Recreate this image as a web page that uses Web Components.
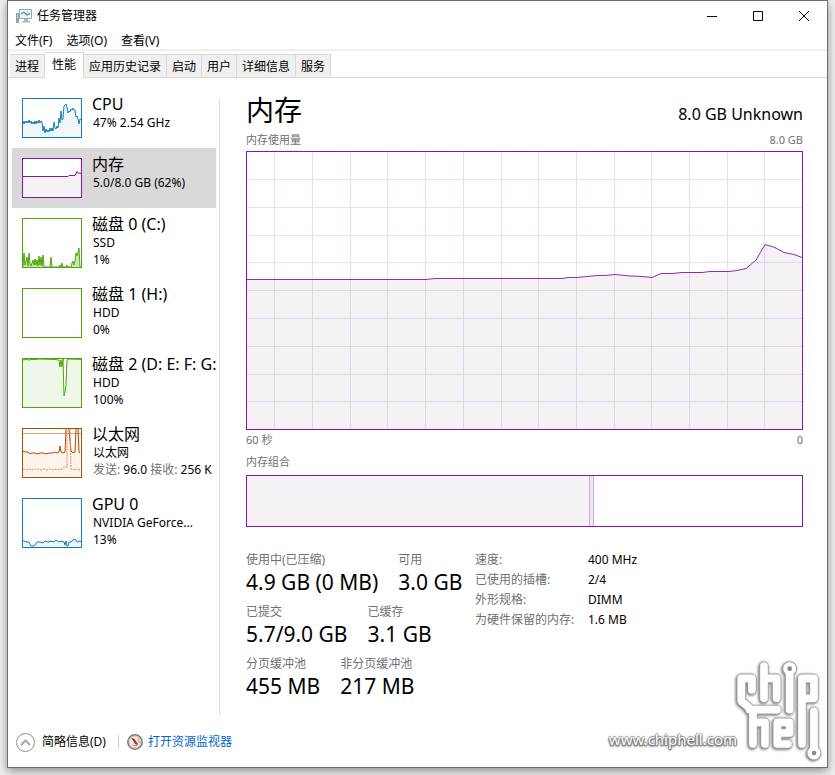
<!DOCTYPE html>
<html lang="zh-CN">
<head>
<meta charset="utf-8">
<title>任务管理器</title>
<style>
  html { height: 100%; }
  body {
    margin: 0; min-height: 100%; box-sizing: border-box; padding: 0 7px 7px;
    display: grid; background: #f0f0f0; color: #000;
    font: 12px/16px "Noto Sans", "Noto Sans CJK SC", sans-serif;
    overflow: hidden;
  }
</style>
</head>
<body>
<tm-window></tm-window>

<script>
const define = (name, html, setup) => {
  const tpl = document.createElement('template');
  tpl.innerHTML = html;
  customElements.define(name, class extends HTMLElement {
    connectedCallback() {
      if (this.shadowRoot) return;
      this.attachShadow({ mode: 'open' }).append(tpl.content.cloneNode(true));
      if (setup) setup(this, this.shadowRoot);
    }
  });
};

define('tm-titlebar', `
<style>
  :host { display: flex; align-items: center; height: 30px; padding-left: 8px; }
  h1 { flex: 1; margin: 0 0 0 5px; font: inherit; }
  button { width: 46px; height: 30px; padding: 0; border: 0; background: none; display: grid; place-items: center; }
  svg { display: block; }
</style>
<svg width="16" height="16" viewBox="0 0 16 16">
  <rect x="0.5" y="5.5" width="2" height="9" fill="#c9c9c9" stroke="#9b9b9b"/>
  <rect x="1" y="11" width="1" height="2" fill="#5cae4a"/>
  <rect x="3.5" y="1.5" width="12" height="9" fill="#e9f5fc" stroke="#a3a8ac"/>
  <path d="M5 6l2-1.500 1.500 0 2.500 2.500 3-1.500" fill="none" stroke="#2f92c8" stroke-width="1.200"/>
  <path d="M8 11h4v2h2v1.500H6V13h2z" fill="#b4b8ba"/>
</svg>
<h1>任务管理器</h1>
<button aria-label="最小化"><svg width="10" height="11" stroke="#000"><path d="M0 5.5h10"/></svg></button>
<button aria-label="最大化"><svg width="10" height="10" stroke="#000" fill="none"><path d="M.5.5h9v9h-9z"/></svg></button>
<button aria-label="关闭"><svg width="10" height="10" stroke="#000" fill="none"><path d="M0 0l10 10M10 0L0 10"/></svg></button>
`);

define('tm-menubar', `
<style>
  :host { display: flex; gap: 14px; height: 18px; padding-left: 7px; border-bottom: 2px solid #f0f0f0; }
  button { padding: 0; border: 0; background: none; color: inherit; font: inherit; line-height: 20px; }
</style>
<button>文件(F)</button><button>选项(O)</button><button>查看(V)</button>
`);

define('tm-tabs', `
<style>
  :host { display: flex; align-items: flex-end; height: 26px; padding-left: 2px; border-bottom: 1px solid #d9d9d9; }
  button {
    box-sizing: border-box; height: 23px; padding: 0 5px; font: inherit; color: inherit; line-height: 21px;
    border: solid #d9d9d9; border-width: 1px 1px 0 0; background: #f0f0f0;
  }
  button:first-child { border-left-width: 1px; padding: 0 4px; }
  button[aria-selected=true] { height: 26px; margin-bottom: -1px; padding: 0 7px 3px; background: #fff; }
</style>
<button role="tab">进程</button><button role="tab" aria-selected="true">性能</button><button role="tab">应用历史记录</button><button role="tab">启动</button><button role="tab">用户</button><button role="tab">详细信息</button><button role="tab">服务</button>
`);

define('tm-resource', `
<style>
  :host { display: block; }
  button {
    width: 100%; min-height: 60px; padding: 10px 0 10px 10px; border: 0; background: none; color: inherit; font: inherit;
    text-align: left; display: flex; align-items: flex-start; gap: 10px; white-space: nowrap;
  }
  :host([selected]) button { background: #d9d9d9; }
  .graph { flex: none; box-sizing: border-box; width: 60px; height: 50px; border: 1px solid var(--ink); background: #fff; color: var(--ink); }
  :host([short]) .graph { height: 40px; }
  .text { flex: none; display: block; margin-top: -4px; }
  .title { display: block; font-size: 16px; line-height: 20px; }
  .lines { display: block; line-height: 17px; padding-left: 1px; }
  ::slotted(svg) { display: block; width: 100%; height: 100%; }
</style>
<button><span class="graph"><slot name="graph"></slot></span><span class="text"><span class="title"><slot name="title"></slot></span><span class="lines"><slot></slot></span></span></button>
`);

define('tm-sidebar', `
<style>
  :host { display: block; overflow: hidden; padding: 10px 0 0 4px; }
  tm-resource { margin-right: 3px; }
  svg { fill: none; stroke-width: 1; overflow: hidden; }
  [slot=graph] * { vector-effect: non-scaling-stroke; }
  .line { display: block; }
  i { font-style: normal; color: #707070; }
  .cpu { --ink: #117dbb; } .mem { --ink: #8b12ae; } .disk { --ink: #4da60c; } .net { --ink: #a74f01; }
</style>
<tm-resource class="cpu" short>
  <svg slot="graph" viewBox="0 0 58 38" preserveAspectRatio="none"><path fill="#f1f6fa" stroke="#117dbb" d="M-2 40V23L0 22 1 25 2 22 3 24 4 22 5 24 6 21 7 24 8 22 9 25 10 23 11 25 12 22 13 25 14 22 15 24 16 21 17 24 18 22 19 23 20 32 21 27 22 34 23 30 24 33 25 31 26 33 27 29 28 32 29 29 30 32 31 23 32 29 33 30 34 27 35 29 36 19 37 24 38 12 39 21 40 20 41 7 42 6 43 5 44 8 45 14 46 12 47 13 48 10 49 11 50 9 51 11 52 11 53 18 54 17 55 20 56 25 57 20 60 22V40"/></svg>
  <span slot="title">CPU</span><span class="line">47% 2.54 GHz</span>
</tm-resource>
<tm-resource class="mem" short selected>
  <svg slot="graph" viewBox="0 0 58 38" preserveAspectRatio="none"><path fill="#f4f2f4" stroke="#8b12ae" d="M-2 40V17.500H45L46 16.500H52L54 12.500 55 14 60 14.500V40"/></svg>
  <span slot="title">内存</span><span class="line">5.0/8.0 GB (62%)</span>
</tm-resource>
<tm-resource class="disk">
  <svg slot="graph" viewBox="0 0 58 48" preserveAspectRatio="none"><path fill="#c9e5b6" stroke="#4da60c" d="M-2 50L0 47 1 34 2 46 4 38 5 47 6 34 7 45 8 47 10 41 11 46 12 40 13 46 14 41 15 47 16 37 17 46 18 38 19 47 20 36 21 48 27 48 28 38 29 48 36 48 37 46 38 48 39 44 40 48 43 48 44 46 45 48 48 48 49 44 50 42 51 46 52 42 53 34 54 37 55 33 56 29 57 48 60 50"/></svg>
  <span slot="title">磁盘 0 (C:)</span><span class="line">SSD</span><span class="line">1%</span>
</tm-resource>
<tm-resource class="disk">
  <span slot="title">磁盘 1 (H:)</span><span class="line">HDD</span><span class="line">0%</span>
</tm-resource>
<tm-resource class="disk">
  <svg slot="graph" viewBox="0 0 58 48" preserveAspectRatio="none"><path fill="#eff7e9" stroke="#4da60c" d="M-2 50V1L4 .5 6 1 8 .5 12 .5 16 0 32 .5 36 1 37 8 38 1 39 8 40 0 41 37 42 33 43 26 44 1 46 0 60 .5V50"/></svg>
  <span slot="title">磁盘 2 (D: E: F: G:</span><span class="line">HDD</span><span class="line">100%</span>
</tm-resource>
<tm-resource class="net">
  <svg slot="graph" viewBox="0 0 58 48" preserveAspectRatio="none"><path fill="#fdf3eb" d="M0 21l6 3h30l3-6 3 6 1-24h4l1 23 4 1 2-24h3v48H0z"/><path stroke="#d8a27c" d="M0 4.500h58"/><path stroke="#a74f01" d="M0 22l2 1 3 0 2 2 2-1 3 0 2 1 3-1 4 0 2 1 3-1 4 0 2-1 2 1 2-1 1-6 1 6 2 1 2-1 1-23M46 0l2 22 2 2 2-1 1-23M55 0l1 23 1 1"/><path stroke="#e58a60" stroke-dasharray="2 1" d="M0 40l3 1 3-1 3 1 3-1 3 0 3 1 3-1 3 1 3-1 3 1 3-1 3 1 3-1 3-2 2 0V0M47 0l1 40 2 1 3-1 2 1 3-1"/></svg>
  <span slot="title">以太网</span><span class="line">以太网</span><span class="line"><i>发送:</i> 96.0 <i>接收:</i> 256 K</span>
</tm-resource>
<tm-resource class="cpu">
  <svg slot="graph" viewBox="0 0 58 48" preserveAspectRatio="none"><path fill="#f1f6fa" stroke="#117dbb" d="M-2 50V42L1 42 3 43 6 43 8 47 11 47 14 43 17 43 20 44 22 42 25 43 28 42 31 43 33 41 36 43 38 42 41 43 42 46 43 42 44 47 45 47 46 43 48 43 50 41 52 40 54 43 56 42 60 43V50"/></svg>
  <span slot="title">GPU 0</span><span class="line">NVIDIA GeForce...</span><span class="line">13%</span>
</tm-resource>
`);

define('usage-chart', `
<style>
  :host { display: block; border: 1px solid #8b12ae; height: 277px; }
  svg { display: block; width: 100%; height: 100%; }
  path { vector-effect: non-scaling-stroke; }
</style>
<svg viewBox="0 0 555 277" preserveAspectRatio="none" fill="none">
  <path class="area" fill="#f4f2f5"/>
  <path class="grid" stroke="#8b12ae" stroke-opacity=".15" shape-rendering="crispEdges"/>
  <path class="line" stroke="#9528b4"/>
</svg>`, (host, root) => {
  const pts = [[0,127.5],[179,127.5],[188,126.5],[315,126.5],[321,125.5],[330,125.5],[350,123.5],[358,123.5],[368,122.5],[383,124],[395,124.5],[405,125.5],[414,121.5],[425,121.5],[435,120.5],[455,120.5],[463,119.5],[482,119.5],[490,118.5],[499,116.5],[509,108],[518,92.5],[528,95.5],[537,100.5],[547,102.5],[555,105.5]];
  const line = 'M' + pts.map(p => p.join(' ')).join('L');
  let grid = '';
  for (let i = 0; i < 14; i++) grid += `M${Math.round(27.3 + i * 37.7) + .5} 0V277`;
  for (let i = 1; i < 10; i++) grid += `M0 ${Math.floor(i * 27.8 - .4) + .5}H555`;
  root.querySelector('.line').setAttribute('d', line);
  root.querySelector('.area').setAttribute('d', line + 'V277H0Z');
  root.querySelector('.grid').setAttribute('d', grid);
});

define('memory-composition', `
<style>
  :host { display: flex; height: 50px; border: 1px solid #8b12ae; }
  .used { flex: 342; background: #f4f2f5; }
  .modified { flex: none; width: 3px; border: solid #cfb0db; border-width: 0 1px; background: #eee3f2; }
  .free { flex: 208; }
</style>
<div class="used"></div><div class="modified"></div><div class="free"></div>
`);

define('tm-stat', `
<style>
  :host { display: block; white-space: nowrap; }
  .label { color: #707070; line-height: 18px; }
  .value { font-size: 21px; line-height: 26px; }
</style>
<div class="label"><slot name="label"></slot></div><div class="value"><slot></slot></div>
`);

define('memory-panel', `
<style>
  :host { display: block; padding: 15px 24px 0 26px; }
  header, .caption { display: flex; justify-content: space-between; }
  header { align-items: center; height: 38px; }
  h2 { margin: 0; font-size: 28px; line-height: 34px; padding-bottom: 4px; font-weight: 400; }
  .model { font-size: 16px; line-height: 24px; padding-top: 4px; }
  .caption { font-size: 11px; line-height: 20px; color: #707070; }
  .caption.top { height: 20px; line-height: 18px; }
  .caption.comp { height: 25px; line-height: 24px; }
  .details { display: grid; grid-template-columns: 229px 1fr; padding-top: 23px; }
  .stats { padding-top: 1px; }
  .row { display: flex; gap: 20px; height: 52px; }
  dl { margin: 0; display: grid; grid-template-columns: 113px 1fr; grid-auto-rows: 20px; align-content: start; line-height: 20px; white-space: nowrap; }
  dt { color: #707070; } dd { margin: 0; }
</style>
<header><h2>内存</h2><span class="model">8.0 GB Unknown</span></header>
<div class="caption top"><span>内存使用量</span><span>8.0 GB</span></div>
<usage-chart></usage-chart>
<div class="caption"><span>60 秒</span><span>0</span></div>
<div class="caption comp"><span>内存组合</span></div>
<memory-composition></memory-composition>
<div class="details">
  <div class="stats">
    <div class="row"><tm-stat><span slot="label">使用中(已压缩)</span>4.9 GB (0 MB)</tm-stat><tm-stat><span slot="label">可用</span>3.0 GB</tm-stat></div>
    <div class="row"><tm-stat><span slot="label">已提交</span>5.7/9.0 GB</tm-stat><tm-stat><span slot="label">已缓存</span>3.1 GB</tm-stat></div>
    <div class="row"><tm-stat><span slot="label">分页缓冲池</span>455 MB</tm-stat><tm-stat><span slot="label">非分页缓冲池</span>217 MB</tm-stat></div>
  </div>
  <dl><dt>速度:</dt><dd>400 MHz</dd><dt>已使用的插槽:</dt><dd>2/4</dd><dt>外形规格:</dt><dd>DIMM</dd><dt>为硬件保留的内存:</dt><dd>1.6 MB</dd></dl>
</div>
`);

define('tm-footer', `
<style>
  :host { display: flex; align-items: center; height: 50px; padding: 2px 0 0 8px; }
  button, a { display: flex; align-items: center; padding: 0; border: 0; background: none; font: inherit; color: inherit; text-decoration: none; }
  button { gap: 7px; } a { gap: 5px; color: #0066cc; }
  .sep { width: 1px; height: 14px; margin: 0 8px 0 12px; background: #d0d0d0; }
</style>
<button><svg width="19" height="19" fill="none"><circle cx="9.5" cy="9.5" r="9" stroke="#919191"/><path d="M5 12l4.500-4.500L14 12" stroke="#a6a6a6" stroke-width="2"/></svg>简略信息(D)</button>
<span class="sep"></span>
<a href="#"><svg width="16" height="16" viewBox="0 0 16 16" fill="none"><circle cx="8" cy="8" r="7.200" fill="#f3f3ee" stroke="#767676" stroke-width="1.500"/><circle cx="8" cy="8" r="5.500" stroke="#c9c9c2"/><path d="M4 3.500l3.500 1.500 3.500 5-1 1.200-2-1.200z" fill="#d4201a"/><path d="M10.500 4.500q2.500 2 1.500 5" stroke="#d98a3a"/><path d="M5.500 11q2.500 1.500 5 0" stroke="#999"/></svg>打开资源监视器</a>
`);

define('site-watermark', `
<style>
  :host { position: absolute; right: 4px; bottom: 4px; display: flex; align-items: flex-end; pointer-events: none; }
  span { color: #fff; font: 15px/20px "Noto Sans", sans-serif; padding-bottom: 14px; margin-right: -4px;
    text-shadow: 0 0 2px #777, 1px 1px 1px #777, -1px 1px 1px #777, 0 -1px 1px #999, 0 2px 2px #888; }
  svg { display: block; filter: drop-shadow(-1px 1px 1px #888) drop-shadow(0 0 1px #aaa); }
</style>
<span>www.chiphell.com</span>
<svg width="90" height="106" viewBox="430 50 270 318" fill="none" stroke-linecap="round" stroke-linejoin="round" role="img" aria-label="chiphell">
  <defs><g id="trace">
    <path d="M487 149V114H455V182L490 212V311M480 208H562M490 246H526V311"/>
    <path d="M523 77V174M523 114H561V174"/>
    <path d="M600 95V208"/>
    <path d="M637 311V114H673V174H645"/>
    <path d="M595 311H563V246H600V278H570"/>
    <path d="M673 213V330"/>
  </g></defs>
  <g stroke="#a0a0a0" stroke-width="27"><use href="#trace"/><circle cx="600" cy="85" r="8"/><circle cx="673" cy="338" r="8"/></g>
  <g stroke="#fff" stroke-width="23"><use href="#trace"/><circle cx="600" cy="85" r="8"/><circle cx="673" cy="338" r="8"/></g>
  <g fill="#888"><circle cx="600" cy="85" r="7"/><circle cx="673" cy="338" r="7"/></g>
</svg>
`);

define('tm-window', `
<style>
  :host { position: relative; display: grid; grid-template-rows: auto auto auto 1fr auto; min-width: 0; background: #fff; border: 1px solid #6e6e6e; box-shadow: 0 3px 9px rgba(0,0,0,.42); }
  main { display: grid; grid-template-columns: 211px 1px 1fr; min-height: 0; }
  .rule { margin-top: 20px; background: #d9d9d9; }
</style>
<tm-titlebar></tm-titlebar><tm-menubar></tm-menubar><tm-tabs></tm-tabs>
<main><tm-sidebar></tm-sidebar><div class="rule"></div><memory-panel></memory-panel></main>
<tm-footer></tm-footer>
<site-watermark></site-watermark>
`);
</script>
</body>
</html>
